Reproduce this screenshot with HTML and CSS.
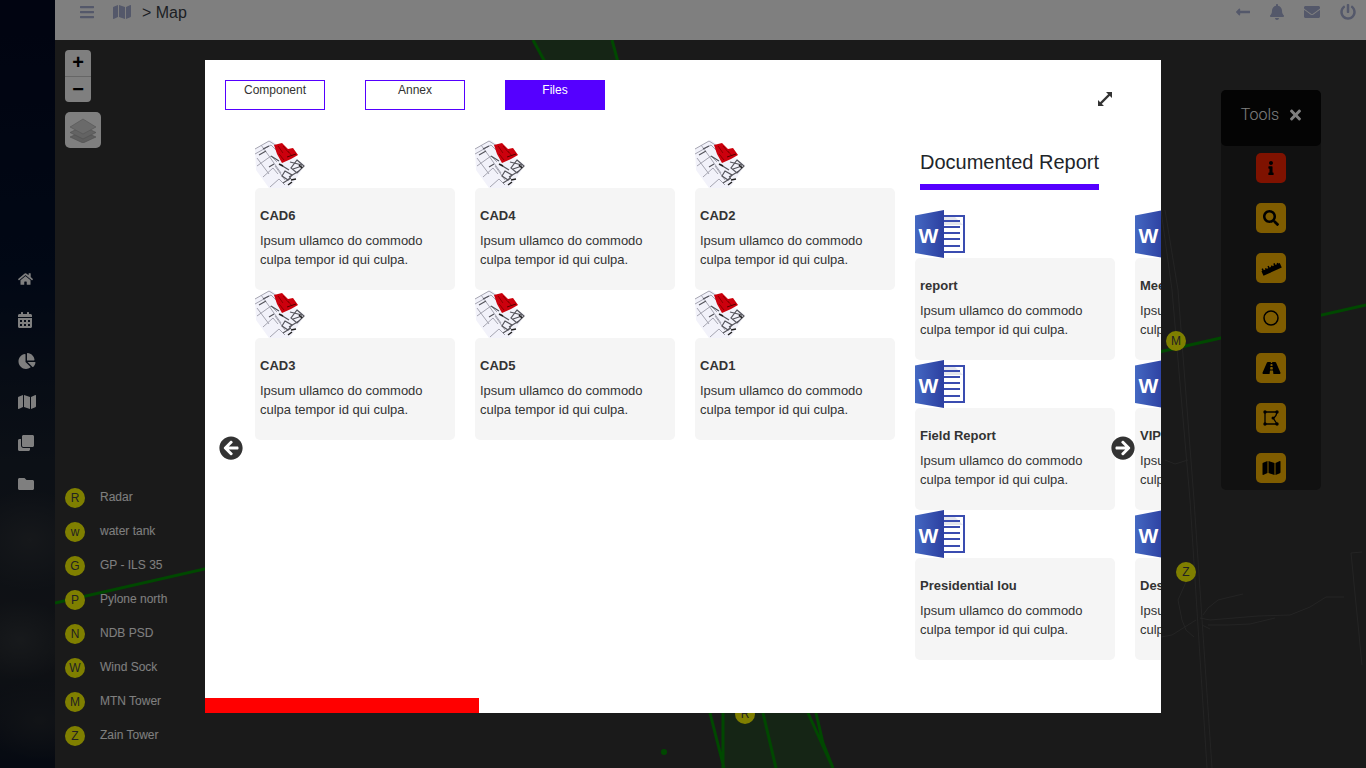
FILE: index.html
```html
<!DOCTYPE html>
<html lang="en">
<head>
    <meta charset="UTF-8">
    <meta name="viewport" content="width=device-width, initial-scale=1.0">
    <title>Map</title>
    <link rel="stylesheet" href="styles.css">
</head>
<body>
    <svg class="icon-defs" xmlns="http://www.w3.org/2000/svg">
        <symbol id="i-bars" viewBox="0 0 448 512"><path d="M16 132h416c8.837 0 16-7.163 16-16V76c0-8.837-7.163-16-16-16H16C7.163 60 0 67.163 0 76v40c0 8.837 7.163 16 16 16zm0 160h416c8.837 0 16-7.163 16-16v-40c0-8.837-7.163-16-16-16H16c-8.837 0-16 7.163-16 16v40c0 8.837 7.163 16 16 16zm0 160h416c8.837 0 16-7.163 16-16v-40c0-8.837-7.163-16-16-16H16c-8.837 0-16 7.163-16 16v40c0 8.837 7.163 16 16 16z"/></symbol>
        <symbol id="i-map" viewBox="0 0 576 512"><path d="M0 117.66v346.32c0 11.32 11.43 19.06 21.94 14.86L160 416V32L20.12 87.95A32.006 32.006 0 0 0 0 117.66zM192 416l192 64V96L192 32v384zM554.06 33.16L416 96v384l139.88-55.95A31.996 31.996 0 0 0 576 394.34V48.02c0-11.32-11.43-19.06-21.94-14.86z"/></symbol>
        <symbol id="i-back" viewBox="0 0 448 512"><path d="M134.059 296H436c6.627 0 12-5.373 12-12v-56c0-6.627-5.373-12-12-12H134.059v-46.059c0-21.382-25.851-32.09-40.971-16.971L7.029 239.029c-9.373 9.373-9.373 24.569 0 33.941l86.059 86.059c15.119 15.119 40.971 4.411 40.971-16.971V296z"/></symbol>
        <symbol id="i-bell" viewBox="0 0 448 512"><path d="M224 512c35.32 0 63.97-28.65 63.97-64H160.03c0 35.35 28.65 64 63.97 64zm215.39-149.71c-19.32-20.76-55.47-51.99-55.47-154.29 0-77.7-54.48-139.9-127.94-155.16V32c0-17.67-14.32-32-31.98-32s-31.98 14.33-31.98 32v20.84C118.56 68.1 64.08 130.3 64.08 208c0 102.3-36.15 133.53-55.47 154.29-6 6.45-8.66 14.16-8.61 21.71.11 16.4 12.98 32 32.1 32h383.8c19.12 0 32-15.6 32.1-32 .05-7.55-2.61-15.27-8.61-21.71z"/></symbol>
        <symbol id="i-mail" viewBox="0 0 512 512"><path d="M502.3 190.8c3.9-3.1 9.7-.2 9.7 4.7V400c0 26.5-21.5 48-48 48H48c-26.5 0-48-21.5-48-48V195.6c0-5 5.7-7.8 9.7-4.7 22.4 17.4 52.1 39.5 154.1 113.6 21.1 15.4 56.7 47.8 92.2 47.6 35.7.3 72-32.8 92.3-47.6 102-74.1 131.6-96.3 154-113.7zM256 320c23.2.4 56.6-29.2 73.4-41.4 132.7-96.3 142.8-104.7 173.4-128.7 5.8-4.5 9.2-11.5 9.2-18.9v-19c0-26.5-21.5-48-48-48H48C21.5 64 0 85.5 0 112v19c0 7.4 3.4 14.3 9.2 18.9 30.6 23.9 40.7 32.4 173.4 128.7 16.8 12.2 50.2 41.8 73.4 41.4z"/></symbol>
        <symbol id="i-power" viewBox="0 0 512 512"><path d="M400 54.1c63 45 104 118.6 104 201.9 0 136.8-110.8 247.7-247.5 248C120 504.3 8.2 393 8 256.4 7.9 173.1 48.9 99.3 111.8 54.2c11.7-8.3 28-4.8 35 7.7L162.6 90c5.9 10.5 3.1 23.8-6.6 31-41.5 30.8-68 79.6-68 134.9-.1 92.3 74.5 168.1 168 168.1 91.6 0 168.6-74.2 168-169.1-.3-51.8-24.7-101.8-68.1-134-9.7-7.2-12.4-20.5-6.5-30.9l15.8-28.1c7-12.4 23.2-16.1 34.8-7.9zM296 264V24c0-13.3-10.7-24-24-24h-32c-13.3 0-24 10.7-24 24v240c0 13.3 10.7 24 24 24h32c13.3 0 24-10.7 24-24z"/></symbol>
        <symbol id="i-home" viewBox="0 0 576 512"><path d="M280.37 148.26L96 300.11V464a16 16 0 0 0 16 16l112.06-.29a16 16 0 0 0 15.92-16V368a16 16 0 0 1 16-16h64a16 16 0 0 1 16 16v95.64a16 16 0 0 0 16 16.05L464 480a16 16 0 0 0 16-16V300L295.67 148.26a12.19 12.19 0 0 0-15.3 0zM571.6 251.47L488 182.56V44.05a12 12 0 0 0-12-12h-56a12 12 0 0 0-12 12v72.61L318.47 43a48 48 0 0 0-61 0L4.34 251.47a12 12 0 0 0-1.6 16.9l25.5 31A12 12 0 0 0 45.15 301l235.22-193.74a12.19 12.19 0 0 1 15.3 0L530.9 301a12 12 0 0 0 16.9-1.6l25.5-31a12 12 0 0 0-1.7-16.93z"/></symbol>
        <symbol id="i-calendar" viewBox="0 0 448 512"><path d="M0 464c0 26.5 21.5 48 48 48h352c26.5 0 48-21.5 48-48V192H0v272zm320-196c0-6.6 5.4-12 12-12h40c6.6 0 12 5.4 12 12v40c0 6.6-5.4 12-12 12h-40c-6.6 0-12-5.4-12-12v-40zm0 128c0-6.6 5.4-12 12-12h40c6.6 0 12 5.4 12 12v40c0 6.6-5.4 12-12 12h-40c-6.6 0-12-5.4-12-12v-40zM192 268c0-6.6 5.4-12 12-12h40c6.6 0 12 5.4 12 12v40c0 6.6-5.4 12-12 12h-40c-6.6 0-12-5.4-12-12v-40zm0 128c0-6.6 5.4-12 12-12h40c6.6 0 12 5.4 12 12v40c0 6.6-5.4 12-12 12h-40c-6.6 0-12-5.4-12-12v-40zM64 268c0-6.6 5.4-12 12-12h40c6.6 0 12 5.4 12 12v40c0 6.6-5.4 12-12 12H76c-6.6 0-12-5.4-12-12v-40zm0 128c0-6.6 5.4-12 12-12h40c6.6 0 12 5.4 12 12v40c0 6.6-5.4 12-12 12H76c-6.6 0-12-5.4-12-12v-40zM400 64h-48V16c0-8.8-7.2-16-16-16h-32c-8.8 0-16 7.2-16 16v48H160V16c0-8.8-7.2-16-16-16h-32c-8.8 0-16 7.2-16 16v48H48C21.5 64 0 85.5 0 112v48h448v-48c0-26.5-21.5-48-48-48z"/></symbol>
        <symbol id="i-pie" viewBox="0 0 544 512"><path d="M527.79 288H290.5l158.03 158.03c6.04 6.04 15.98 6.53 22.19.68 38.7-36.46 65.32-85.61 73.13-140.86 1.34-9.46-6.51-17.85-16.06-17.85zm-15.83-64.8C503.72 103.74 408.26 8.28 288.8.04 279.68-.59 272 7.1 272 16.24V240h223.77c9.14 0 16.82-7.68 16.19-16.8zM224 288V50.71c0-9.55-8.39-17.4-17.84-16.06C86.99 51.49-4.1 155.6.14 280.37 4.5 408.51 114.83 513.59 243.03 511.98c50.4-.63 96.97-16.87 135.26-44.03 7.9-5.6 8.42-17.23 1.57-24.08L224 288z"/></symbol>
        <symbol id="i-clone" viewBox="0 0 512 512"><path d="M464 0c26.51 0 48 21.49 48 48v288c0 26.51-21.49 48-48 48H176c-26.51 0-48-21.49-48-48V48c0-26.51 21.49-48 48-48h288M176 416c-44.112 0-80-35.888-80-80V128H48c-26.51 0-48 21.49-48 48v288c0 26.51 21.49 48 48 48h288c26.51 0 48-21.49 48-48v-48H176z"/></symbol>
        <symbol id="i-folder" viewBox="0 0 512 512"><path d="M464 128H272l-64-64H48C21.49 64 0 85.49 0 112v288c0 26.51 21.49 48 48 48h416c26.51 0 48-21.49 48-48V176c0-26.51-21.49-48-48-48z"/></symbol>
        <symbol id="i-info" viewBox="0 0 192 512"><path d="M20 424.229h20V279.771H20c-11.046 0-20-8.954-20-20V212c0-11.046 8.954-20 20-20h112c11.046 0 20 8.954 20 20v212.229h20c11.046 0 20 8.954 20 20V492c0 11.046-8.954 20-20 20H20c-11.046 0-20-8.954-20-20v-47.771c0-11.046 8.954-20 20-20zM96 0C56.235 0 24 32.235 24 72s32.235 72 72 72 72-32.235 72-72S135.764 0 96 0z"/></symbol>
        <symbol id="i-search" viewBox="0 0 512 512"><path d="M505 442.7L405.3 343c-4.5-4.5-10.6-7-17-7H372c27.6-35.3 44-79.7 44-128C416 93.1 322.9 0 208 0S0 93.1 0 208s93.1 208 208 208c48.3 0 92.7-16.4 128-44v16.3c0 6.4 2.5 12.5 7 17l99.7 99.7c9.4 9.4 24.6 9.4 33.9 0l28.3-28.3c9.4-9.4 9.4-24.6.1-34zM208 336c-70.7 0-128-57.2-128-128 0-70.7 57.2-128 128-128 70.7 0 128 57.2 128 128 0 70.7-57.2 128-128 128z"/></symbol>
        <symbol id="i-ruler" viewBox="-1 -2 22 20"><g transform="rotate(-24 10 8)"><rect x="0" y="7" width="20" height="5"/><path d="M1 8V5h1.500v3zM4.200 8V6h1.500v2zM7.400 8V5h1.500v3zM10.600 8V6h1.500v2zM13.800 8V5h1.500v3zM17 8V6h1.500v2z"/></g></symbol>
        <symbol id="i-circle" viewBox="0 0 16 16"><circle cx="8" cy="8" r="7" fill="none" stroke="currentColor" stroke-width="1.500"/></symbol>
        <symbol id="i-road" viewBox="0 0 576 512"><path d="M573.19 402.67l-139.79-320C428.43 71.29 417.6 64 405.68 64h-97.59l2.45 23.16c.5 4.72-3.21 8.84-7.96 8.84h-29.16c-4.75 0-8.46-4.12-7.96-8.84L267.91 64h-97.59c-11.93 0-22.76 7.29-27.73 18.67L2.8 402.67C-6.45 423.86 8.31 448 30.54 448h196.84l10.31-97.68c.86-8.14 7.72-14.32 15.91-14.32h68.8c8.19 0 15.05 6.18 15.91 14.32L348.62 448h196.84c22.23 0 36.99-24.14 27.73-45.33zM260.4 135.16a8 8 0 0 1 7.96-7.16h39.29c4.09 0 7.53 3.09 7.96 7.16l4.6 43.58c.75 7.09-4.81 13.26-11.93 13.26h-40.54c-7.13 0-12.68-6.17-11.93-13.26l4.59-43.58zM315.64 304h-55.29c-9.5 0-16.91-8.23-15.91-17.68l5.07-48c.86-8.14 7.72-14.32 15.91-14.32h45.15c8.19 0 15.05 6.18 15.91 14.32l5.07 48c1 9.45-6.41 17.68-15.91 17.68z"/></symbol>
        <symbol id="i-polygon" viewBox="0 0 16 16"><path d="M2 2h12l-1 3.500-2.500 3 3.500 5.500H2z" fill="none" stroke="currentColor" stroke-width="1.300"/><circle cx="2" cy="2" r="1.700"/><circle cx="14" cy="2" r="1.700"/><circle cx="10" cy="8" r="1.500"/><circle cx="14" cy="14" r="1.700"/><circle cx="2" cy="14" r="1.700"/></symbol>
        <symbol id="i-times" viewBox="0 0 352 512"><path d="M242.72 256l100.07-100.07c12.28-12.28 12.28-32.19 0-44.48l-22.24-22.24c-12.28-12.28-32.19-12.28-44.48 0L176 189.28 75.93 89.21c-12.28-12.28-32.19-12.28-44.48 0L9.21 111.45c-12.28 12.28-12.28 32.19 0 44.48L109.28 256 9.21 356.07c-12.28 12.28-12.28 32.19 0 44.48l22.24 22.24c12.28 12.28 32.2 12.28 44.48 0L176 322.72l100.07 100.07c12.28 12.28 32.2 12.28 44.48 0l22.24-22.24c12.28-12.28 12.28-32.19 0-44.48L242.72 256z"/></symbol>
        <symbol id="i-left" viewBox="0 0 512 512"><path d="M256 504C119 504 8 393 8 256S119 8 256 8s248 111 248 248-111 248-248 248zm28.900-143.600L209.400 288H392c13.300 0 24-10.700 24-24v-16c0-13.300-10.700-24-24-24H209.400l75.500-72.400c9.700-9.300 9.900-24.800.4-34.300l-11-10.900c-9.400-9.400-24.600-9.400-33.900 0L107.700 239c-9.400 9.400-9.400 24.600 0 33.900l132.700 132.700c9.400 9.400 24.600 9.400 33.900 0l11-10.900c9.500-9.500 9.300-25-.4-34.300z"/></symbol>
        <symbol id="i-right" viewBox="0 0 512 512"><path d="M256 8c137 0 248 111 248 248S393 504 256 504 8 393 8 256 119 8 256 8zm-28.900 143.600l75.500 72.400H120c-13.300 0-24 10.700-24 24v16c0 13.300 10.700 24 24 24h182.600l-75.500 72.400c-9.700 9.300-9.900 24.800-.4 34.300l11 10.900c9.400 9.400 24.600 9.400 33.900 0L404.300 273c9.400-9.400 9.400-24.600 0-33.900L271.600 106.300c-9.400-9.400-24.600-9.400-33.900 0l-11 10.900c-9.500 9.600-9.300 25.100.4 34.400z"/></symbol>
        <symbol id="i-expand" viewBox="0 0 16 16"><path d="M9 1h6v6zM1 9v6h6z"/><path d="M3.500 12.500L12.500 3.500" stroke="#333" stroke-width="2.400"/></symbol>
        <symbol id="i-layers" viewBox="0 0 26 26"><path d="M13 14l13 6-13 6-13-6z" fill="#bcbcbc" stroke="#9a9a9a" stroke-width=".6"/><path d="M13 9l13 6.500-13 6.500-13-6.500z" fill="#c6c6c6" stroke="#9a9a9a" stroke-width=".6"/><path d="M13 2l13 8-13 7-13-7z" fill="#d4d4d4" stroke="#a6a6a6" stroke-width=".6"/></symbol>
        <filter id="scan-soft"><feGaussianBlur stdDeviation="0.4"/></filter>
        <symbol id="i-cad" viewBox="0 0 50 48">
            <g filter="url(#scan-soft)">
                <path d="M0 9L16 0l34 25-15 23H14L1 30z" fill="#f2f2fa"/>
                <g fill="none" stroke="#a4a4b0" stroke-width="1">
                    <path d="M0 9L14 1l8 5M0 14l16-9 5 5M2 26l14-10 6 6M8 37l10-9 5 6M15 47l9-8 6 6"/>
                    <path d="M6 5l8 11M2 18l12 16M14 16l12 17M20 26l10 14"/>
                </g>
                <g fill="none" stroke="#55555c" stroke-width="1.200">
                    <path d="M8 9l6-3M4 15l7-4M16 16l8 5M26 25l8 5M35 22l12 3M38 29l9-3M34 37l10-6M28 43l8-5M14 27l5-3"/>
                    <path d="M42 20l7 6-7 7-6-5zM30 31l7 4-4 5-6-4z"/>
                </g>
                <path d="M33 45l4-3M36 40l5-1M44 25l3 3M24 24l4 2" stroke="#222" stroke-width="1.500" fill="none"/>
                <path d="M19 5l8-2 6 6 5-1 5 7-7 4-9 4-5-9z" fill="#cc0008"/>
                <path d="M23 6l5 7M28 6l6 7M33 11l4 5M24 14l5 6" stroke="#8c0006" stroke-width="1" fill="none"/>
                <path d="M32 17l9-3" stroke="#5a0006" stroke-width="1" fill="none"/>
            </g>
        </symbol>
        <linearGradient id="word-blue" x1="0" y1="0" x2="1" y2="0">
            <stop offset="0" stop-color="#4468c2"/>
            <stop offset="1" stop-color="#2c3fa0"/>
        </linearGradient>
        <symbol id="i-word" viewBox="0 0 50 48">
            <rect x="28" y="5" width="22" height="38" fill="#3a4cb0"/>
            <rect x="29" y="7" width="19" height="34" fill="#fff"/>
            <path d="M29 7h11l8 8H29z" fill="#e4e6ee"/>
            <path d="M29 11h16M29 17h16M29 23h16M29 29h16M29 36h16" stroke="#3a4cb0" stroke-width="1.800"/>
            <path d="M0 5.500L29 0v48L0 43z" fill="url(#word-blue)"/>
            <text x="13.500" y="33" class="word-letter">W</text>
        </symbol>
    </svg>

    <div class="app">
        <nav class="side-nav">
            <svg class="nav-icon nav-home"><use href="#i-home"/></svg>
            <svg class="nav-icon nav-narrow"><use href="#i-calendar"/></svg>
            <svg class="nav-icon"><use href="#i-pie"/></svg>
            <svg class="nav-icon"><use href="#i-map"/></svg>
            <svg class="nav-icon nav-square"><use href="#i-clone"/></svg>
            <svg class="nav-icon nav-square"><use href="#i-folder"/></svg>
        </nav>
        <div class="main">
            <header class="topbar">
                <svg class="top-icon top-icon-bars"><use href="#i-bars"/></svg>
                <svg class="top-icon top-icon-map"><use href="#i-map"/></svg>
                <span class="crumb">&gt; Map</span>
                <div class="top-actions">
                    <svg class="top-icon top-icon-bars"><use href="#i-back"/></svg>
                    <svg class="top-icon top-icon-bars"><use href="#i-bell"/></svg>
                    <svg class="top-icon top-icon-square"><use href="#i-mail"/></svg>
                    <svg class="top-icon top-icon-square"><use href="#i-power"/></svg>
                </div>
            </header>
            <div class="map">
                <svg class="map-lines" viewBox="55 40 1311 728">
                    <path class="zone" d="M533 40L545 60H618L612 40zM723 713V768H833L808 713z"/>
                    <path class="route" d="M55 603L1366 305M533 40L545 62M612 40L618 62M710 713L724 768M723 713V768M763 713L776 768M808 713L833 768M816 713L823 743 833 768"/>
                    <circle class="route-dot" cx="664" cy="752" r="3"/>
                    <path class="road" d="M1161 210L1172 290 1190 500 1207 768M1165 210L1178 290 1194 500 1212 768M1165 460L1175 464 1188 460M1186 582L1178 600 1182 620 1186 630 1194 637M1161 637L1172 635 1180 630 1196 620M1200 618L1210 620 1258 616 1290 615 1310 607 1326 597 1344 597M1203 615L1208 608 1218 600 1226 598 1243 594M1202 625L1210 629M1208 625L1228 625 1250 624 1275 618M1351 553L1362 552M1351 553L1362 665"/>
                </svg>
                <div class="map-controls">
                    <div class="zoom-box">
                        <div class="zoom-btn">+</div>
                        <div class="zoom-btn">&minus;</div>
                    </div>
                    <div class="layers-btn"><svg class="layers-icon"><use href="#i-layers"/></svg></div>
                </div>
                <ul class="legend">
                    <li class="legend-row"><span class="pin">R</span>Radar</li>
                    <li class="legend-row"><span class="pin">w</span>water tank</li>
                    <li class="legend-row"><span class="pin">G</span>GP - ILS 35</li>
                    <li class="legend-row"><span class="pin">P</span>Pylone north</li>
                    <li class="legend-row"><span class="pin">N</span>NDB PSD</li>
                    <li class="legend-row"><span class="pin">W</span>Wind Sock</li>
                    <li class="legend-row"><span class="pin">M</span>MTN Tower</li>
                    <li class="legend-row"><span class="pin">Z</span>Zain Tower</li>
                </ul>
                <span class="pin map-pin pin-mtn">M</span>
                <span class="pin map-pin pin-zain">Z</span>
                <span class="pin map-pin pin-radar">R</span>
                <aside class="tools">
                    <div class="tools-head">Tools <svg class="tools-close"><use href="#i-times"/></svg></div>
                    <div class="tool tool-info"><svg class="tool-icon icon-info"><use href="#i-info"/></svg></div>
                    <div class="tool"><svg class="tool-icon"><use href="#i-search"/></svg></div>
                    <div class="tool"><svg class="tool-icon icon-ruler"><use href="#i-ruler"/></svg></div>
                    <div class="tool"><svg class="tool-icon"><use href="#i-circle"/></svg></div>
                    <div class="tool"><svg class="tool-icon icon-wide"><use href="#i-road"/></svg></div>
                    <div class="tool"><svg class="tool-icon"><use href="#i-polygon"/></svg></div>
                    <div class="tool"><svg class="tool-icon icon-wide"><use href="#i-map"/></svg></div>
                </aside>
            </div>
        </div>
    </div>

    <div class="backdrop">
        <div class="modal">
            <div class="tabs">
                <div class="tab">Component</div>
                <div class="tab">Annex</div>
                <div class="tab tab-active">Files</div>
                <svg class="expand"><use href="#i-expand"/></svg>
            </div>
            <div class="gallery">
                <div class="card-grid card-grid-cad">
                    <div class="item"><svg class="thumb"><use href="#i-cad"/></svg><div class="card"><h4>CAD6</h4><p>Ipsum ullamco do commodo culpa tempor id qui culpa.</p></div></div>
                    <div class="item"><svg class="thumb"><use href="#i-cad"/></svg><div class="card"><h4>CAD4</h4><p>Ipsum ullamco do commodo culpa tempor id qui culpa.</p></div></div>
                    <div class="item"><svg class="thumb"><use href="#i-cad"/></svg><div class="card"><h4>CAD2</h4><p>Ipsum ullamco do commodo culpa tempor id qui culpa.</p></div></div>
                    <div class="item"><svg class="thumb"><use href="#i-cad"/></svg><div class="card"><h4>CAD3</h4><p>Ipsum ullamco do commodo culpa tempor id qui culpa.</p></div></div>
                    <div class="item"><svg class="thumb"><use href="#i-cad"/></svg><div class="card"><h4>CAD5</h4><p>Ipsum ullamco do commodo culpa tempor id qui culpa.</p></div></div>
                    <div class="item"><svg class="thumb"><use href="#i-cad"/></svg><div class="card"><h4>CAD1</h4><p>Ipsum ullamco do commodo culpa tempor id qui culpa.</p></div></div>
                </div>
                <div class="report">
                    <h3 class="report-title">Documented Report</h3>
                    <div class="card-grid card-grid-report">
                        <div class="item"><svg class="thumb"><use href="#i-word"/></svg><div class="card"><h4>report</h4><p>Ipsum ullamco do commodo culpa tempor id qui culpa.</p></div></div>
                        <div class="item"><svg class="thumb"><use href="#i-word"/></svg><div class="card"><h4>Meeting</h4><p>Ipsum ullamco do commodo culpa tempor id qui culpa.</p></div></div>
                        <div class="item"><svg class="thumb"><use href="#i-word"/></svg><div class="card"><h4>Field Report</h4><p>Ipsum ullamco do commodo culpa tempor id qui culpa.</p></div></div>
                        <div class="item"><svg class="thumb"><use href="#i-word"/></svg><div class="card"><h4>VIP</h4><p>Ipsum ullamco do commodo culpa tempor id qui culpa.</p></div></div>
                        <div class="item"><svg class="thumb"><use href="#i-word"/></svg><div class="card"><h4>Presidential lou</h4><p>Ipsum ullamco do commodo culpa tempor id qui culpa.</p></div></div>
                        <div class="item"><svg class="thumb"><use href="#i-word"/></svg><div class="card"><h4>Design</h4><p>Ipsum ullamco do commodo culpa tempor id qui culpa.</p></div></div>
                    </div>
                </div>
            </div>
            <svg class="arrow arrow-prev"><use href="#i-left"/></svg>
            <svg class="arrow arrow-next"><use href="#i-right"/></svg>
            <div class="progress"></div>
        </div>
    </div>
</body>
</html>
```

FILE: styles.css
```css
* {
    box-sizing: border-box;
}
body {
    margin: 0;
    height: 100vh;
    overflow: hidden;
    font-family: "Liberation Sans", Arial, sans-serif;
    background-color: #343434;
}
.icon-defs {
    position: absolute;
    width: 0;
    height: 0;
}
.word-letter {
    font-family: "Liberation Sans", Arial, sans-serif;
    font-size: 21px;
    font-weight: bold;
    fill: #fff;
    text-anchor: middle;
}
.app {
    display: flex;
    height: 100vh;
}

/* left nav */
.side-nav {
    width: 55px;
    flex-shrink: 0;
    display: flex;
    flex-direction: column;
    gap: 25px;
    padding: 271px 0 0 18px;
    background:
        radial-gradient(ellipse 50px 40px at 20px 640px, #2f3338, transparent),
        radial-gradient(ellipse 60px 50px at 30px 540px, #2c3036, transparent),
        radial-gradient(ellipse 60px 40px at 40px 720px, #23272e, transparent),
        linear-gradient(#020822 0%, #03102a 35%, #18202c 60%, #20242a 85%, #0c1424 100%);
}
.nav-icon {
    width: 18px;
    height: 16px;
    fill: #fff;
}
.nav-home {
    width: 15px;
}
.nav-narrow {
    width: 14px;
}
.nav-square {
    width: 16px;
}

/* top bar */
.main {
    flex: 1;
    display: flex;
    flex-direction: column;
}
.topbar {
    height: 40px;
    flex-shrink: 0;
    display: flex;
    padding: 4px 10px 0 25px;
    background-color: #fff;
}
.top-icon {
    height: 16px;
    fill: #a8b0d4;
}
.top-icon-bars {
    width: 14px;
}
.top-icon-square {
    width: 16px;
}
.top-icon-map {
    width: 18px;
    margin-left: 19px;
}
.crumb {
    margin-left: 11px;
    font-size: 16px;
    line-height: 18px;
    color: #3a3f48;
}
.top-actions {
    margin-left: auto;
    display: flex;
    gap: 20px;
}

/* map */
.map {
    flex: 1;
    position: relative;
}
.map-lines {
    position: absolute;
    top: 0;
    left: 0;
    width: 1311px;
    height: 728px;
}
.zone {
    fill: #2b4a2b;
}
.route {
    fill: none;
    stroke: #009000;
    stroke-width: 3;
}
.route-dot {
    fill: #009000;
}
.road {
    fill: none;
    stroke: #484848;
    stroke-width: 1;
}
.map-controls {
    position: absolute;
    top: 10px;
    left: 10px;
    display: flex;
    flex-direction: column;
    gap: 10px;
}
.zoom-box {
    width: 26px;
    border-radius: 4px;
    background-color: #fff;
    overflow: hidden;
}
.zoom-btn {
    height: 26px;
    text-align: center;
    font-size: 20px;
    font-weight: bold;
    line-height: 25px;
    color: #000;
}
.zoom-btn + .zoom-btn {
    border-top: 1px solid #ccc;
}
.layers-btn {
    width: 36px;
    height: 36px;
    padding: 5px;
    border-radius: 5px;
    background-color: #fff;
}
.layers-icon {
    display: block;
    width: 26px;
    height: 26px;
}
.legend {
    position: absolute;
    top: 448px;
    left: 10px;
    margin: 0;
    padding: 0;
    list-style: none;
    display: flex;
    flex-direction: column;
    gap: 14px;
}
.legend-row {
    display: flex;
    align-items: flex-start;
    height: 20px;
    font-size: 12px;
    line-height: 18px;
    color: #fff;
}
.pin {
    width: 20px;
    height: 20px;
    margin-right: 15px;
    border-radius: 50%;
    background-color: #ffff00;
    text-align: center;
    font-size: 12px;
    line-height: 21px;
    color: #444;
}
.map-pin {
    position: absolute;
    margin: 0;
}
.pin-mtn {
    left: 1111px;
    top: 291px;
}
.pin-zain {
    left: 1121px;
    top: 522px;
}
.pin-radar {
    left: 680px;
    top: 664px;
}

/* tools panel */
.tools {
    position: absolute;
    top: 50px;
    left: 1166px;
    width: 100px;
    height: 400px;
    display: flex;
    flex-direction: column;
    align-items: center;
    gap: 20px;
    border-radius: 5px;
    background-color: #222;
}
.tools-head {
    width: 100%;
    height: 56px;
    margin-bottom: -13px;
    padding-bottom: 7px;
    display: flex;
    align-items: center;
    justify-content: center;
    gap: 11px;
    border-radius: 5px;
    background-color: #080808;
    font-family: Roboto, "Liberation Sans", sans-serif;
    font-size: 16px;
    font-weight: 300;
    color: #fff;
}
.tools-close {
    width: 11px;
    height: 16px;
    fill: #fff;
}
.tool {
    width: 30px;
    height: 30px;
    flex-shrink: 0;
    display: flex;
    align-items: center;
    justify-content: center;
    border-radius: 5px;
    background-color: #ffb800;
}
.tool-info {
    background-color: #ff2400;
}
.tool-icon {
    width: 16px;
    height: 16px;
    fill: #000;
    color: #000;
}
.icon-info {
    width: 6px;
    height: 14px;
}
.icon-wide {
    width: 19px;
}
.icon-ruler {
    width: 22px;
    height: 20px;
}

/* modal */
.backdrop {
    position: fixed;
    top: 0;
    left: 0;
    right: 0;
    bottom: 0;
    background-color: rgba(0, 0, 0, 0.5);
}
.modal {
    position: relative;
    width: 956px;
    height: 653px;
    margin: 60px 0 0 205px;
    background-color: #fff;
    overflow: hidden;
}
.tabs {
    display: flex;
    gap: 40px;
    padding: 20px 20px 0;
}
.tab {
    width: 100px;
    height: 30px;
    border: 1px solid #5500ff;
    text-align: center;
    font-size: 12px;
    line-height: 19px;
    color: #333;
}
.tab-active {
    background-color: #5500ff;
    color: #fff;
}
.expand {
    width: 16px;
    height: 16px;
    margin: 11px 0 0 452px;
    fill: #333;
}
.gallery {
    display: flex;
    align-items: flex-start;
    gap: 20px;
    margin-top: 30px;
    padding-left: 50px;
}
.card-grid {
    display: grid;
    grid-template-columns: repeat(3, 200px);
    column-gap: 20px;
    flex-shrink: 0;
}
.card-grid-report {
    grid-template-columns: repeat(2, 200px);
}
.item {
    width: 200px;
}
.thumb {
    display: block;
    width: 50px;
    height: 48px;
}
.card {
    height: 102px;
    padding: 18px 5px 0;
    border-radius: 5px;
    background-color: #f5f5f5;
    font-size: 13px;
    line-height: 19px;
}
.card h4 {
    margin: 0 0 6px;
    font-size: 13px;
    font-weight: bold;
    color: #333;
    white-space: nowrap;
}
.card p {
    margin: 0;
    color: #333;
}
.report {
    flex-shrink: 0;
}
.report-title {
    display: inline-block;
    margin: 10px 0 20px 5px;
    padding-bottom: 10px;
    border-bottom: 6px solid #5500ff;
    font-size: 20px;
    font-weight: normal;
    line-height: 24px;
    color: #212529;
    vertical-align: top;
}
.arrow {
    position: absolute;
    top: 376px;
    width: 24px;
    height: 24px;
    fill: #333;
}
.arrow-prev {
    left: 14px;
}
.arrow-next {
    left: 906px;
}
.progress {
    position: absolute;
    left: 0;
    bottom: 0;
    width: 274px;
    height: 15px;
    background-color: #ff0000;
}
```
